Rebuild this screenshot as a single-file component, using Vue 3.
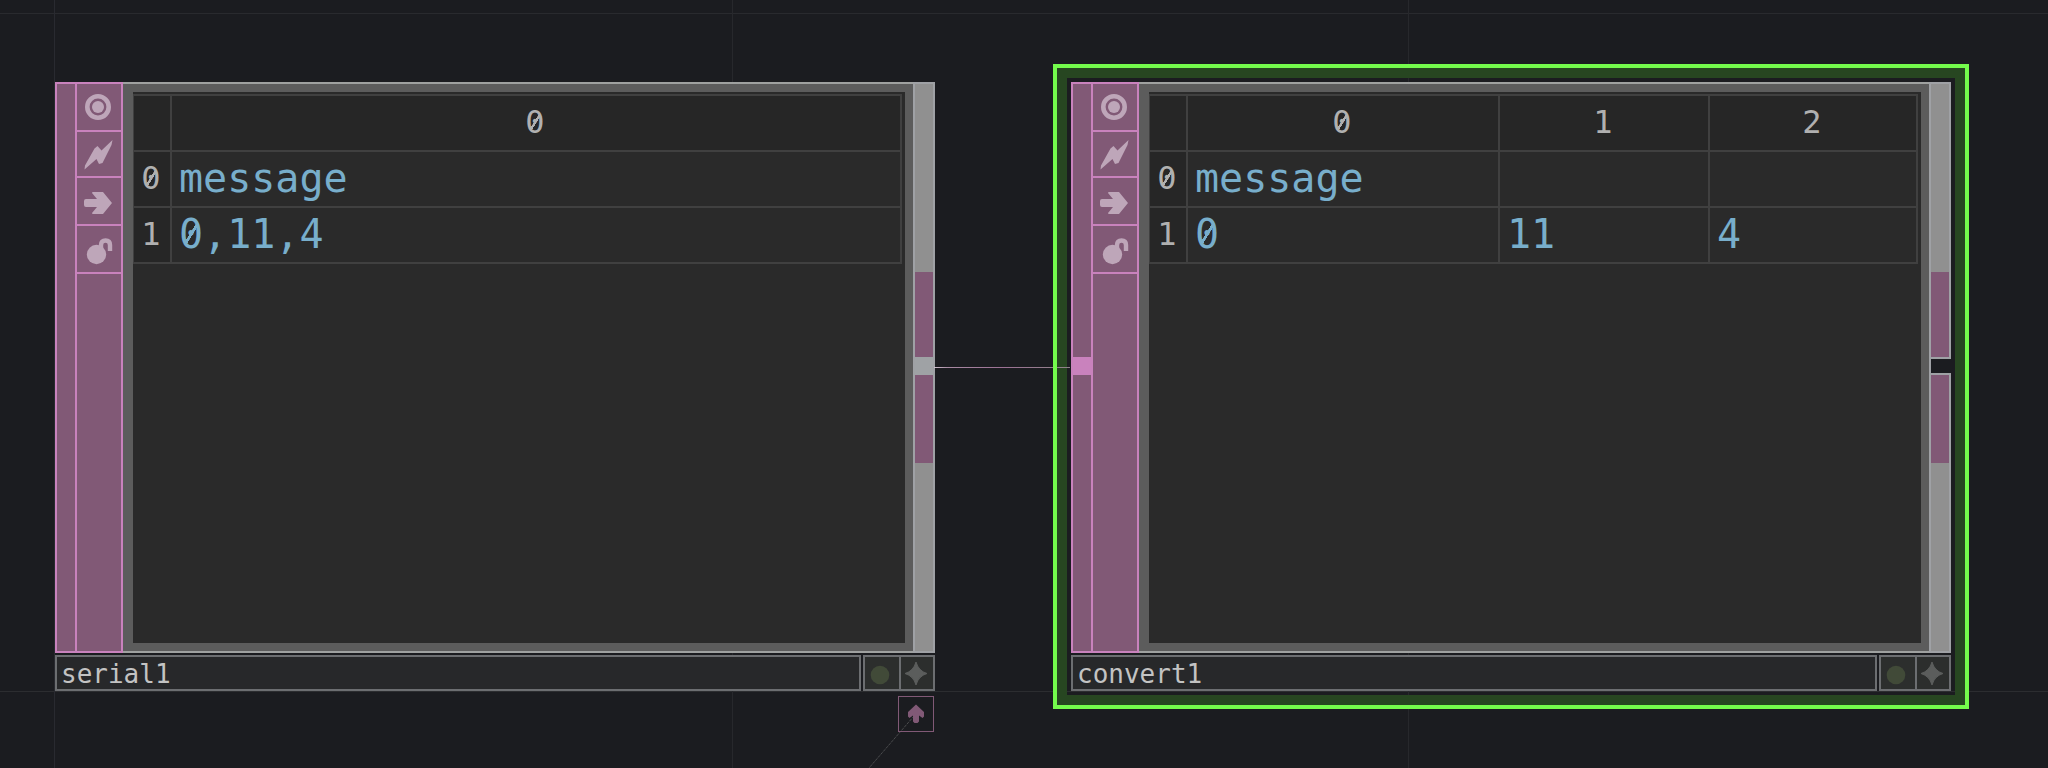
<script setup>
const nodes = [
  {
    name: 'serial1',
    place: 'at-serial',
    selected: false,
    columns: ['0'],
    rows: [['message'], ['0,11,4']]
  },
  {
    name: 'convert1',
    place: 'at-convert',
    selected: true,
    columns: ['0', '1', '2'],
    rows: [['message', '', ''], ['0', '11', '4']]
  }
]

// Splits a value so that each zero can carry a slash.
const parts = (value) => String(value).split(/(0)/).filter(Boolean)
</script>

<template>
  <main class="network">
    <section
      v-for="node in nodes"
      :key="node.name"
      class="node"
      :class="[node.place, { selected: node.selected }]"
      :aria-label="node.name"
    >
      <div class="body">
        <div class="inputs">
          <span v-if="node.selected" class="socket"></span>
        </div>
        <div class="flags">
          <button type="button" aria-label="Viewer active">
            <svg viewBox="0 0 44 44">
              <circle cx="21" cy="22" r="10.7" fill="none" stroke="currentColor" stroke-width="4.6" />
              <circle cx="21" cy="22" r="6" fill="currentColor" />
            </svg>
          </button>
          <button type="button" aria-label="Bypass">
            <svg viewBox="0 0 44 44">
              <path d="M35.500 8 34.500 13 25.500 31 22 32 19.500 27 7.500 37.500 8 33.500 17.500 16.500 20.500 14 24.500 18.500Z" fill="currentColor" />
            </svg>
          </button>
          <button type="button" aria-label="Pass through">
            <svg viewBox="0 0 44 44">
              <path d="M9 20H20L15 14Q15 13 16 13H26L35 24 26 35H16Q15 35 15 34L20 28H9Q7 28 7 26V22Q7 20 9 20Z" fill="currentColor" />
            </svg>
          </button>
          <button type="button" aria-label="Lock">
            <svg viewBox="0 0 44 44">
              <circle cx="19.500" cy="27.500" r="9.700" fill="currentColor" />
              <path d="M24 21V18Q24 13.500 28.500 13.500Q33 13.500 33 18V24" fill="none" stroke="currentColor" stroke-width="4.400" />
            </svg>
          </button>
        </div>
        <div class="viewer">
          <table :aria-label="node.name + ' data'">
            <colgroup>
              <col class="c-index" />
              <col v-for="(c, i) in node.columns" :key="c" :class="node.columns.length > 1 ? 'c-' + i : ''" />
            </colgroup>
            <thead>
              <tr>
                <td class="corner"></td>
                <th v-for="c in node.columns" :key="c" scope="col">
                  <span v-for="(p, k) in parts(c)" :key="k" :class="{ zero: p === '0' }">{{ p }}</span>
                </th>
              </tr>
            </thead>
            <tbody>
              <tr v-for="(row, r) in node.rows" :key="r">
                <th scope="row">
                  <span v-for="(p, k) in parts(r)" :key="k" :class="{ zero: p === '0' }">{{ p }}</span>
                </th>
                <td v-for="(cell, i) in row" :key="i">
                  <span v-for="(p, k) in parts(cell)" :key="k" :class="{ zero: p === '0' }">{{ p }}</span>
                </td>
              </tr>
            </tbody>
          </table>
        </div>
        <div class="outputs" :class="{ open: node.selected }">
          <span class="tab"></span>
          <span class="socket"></span>
          <span class="tab"></span>
        </div>
      </div>
      <div class="footer">
        <input class="name" type="text" :value="node.name" :aria-label="node.name + ' name'" spellcheck="false" />
        <div class="tools">
          <button type="button" aria-label="Status">
            <svg viewBox="0 0 34 32"><circle cx="15" cy="18" r="9.300" fill="#414a38" /></svg>
          </button>
          <button type="button" aria-label="Activate viewer">
            <svg viewBox="0 0 32 32">
              <path d="M15 5Q17.500 14 26 16.500Q17.500 19 15 28Q12.500 19 4 16.500Q12.500 14 15 5Z" fill="#5b5d5c" stroke="#5b5d5c" />
            </svg>
          </button>
        </div>
      </div>
    </section>

    <svg class="wire" viewBox="0 0 136 1" aria-hidden="true">
      <defs>
        <linearGradient id="wireFade">
          <stop offset="0" stop-color="#d0c4cf" />
          <stop offset="0.1" stop-color="#a88aa3" />
          <stop offset="0.5" stop-color="#9c7194" />
          <stop offset="1" stop-color="#8f8389" />
        </linearGradient>
      </defs>
      <rect width="136" height="1" fill="url(#wireFade)" />
    </svg>

    <svg class="link" viewBox="0 0 46 52" aria-hidden="true">
      <path d="M45 0 0 52" fill="none" stroke="#4b4c4e" stroke-width="1" stroke-dasharray="3 1" />
    </svg>
    <button type="button" class="dock" aria-label="Docked operator">
      <svg viewBox="0 0 34 34">
        <path d="M17 7.500 25 15V19.500L23.500 21 20 18.500V24.500L18.500 26H15.500L14 24.500V18.500L10.500 21 9 19.500V15Z" fill="#815976" />
      </svg>
    </button>
  </main>
</template>

<style>
body {
  margin: 0;
  background: #1b1c20;
}
</style>

<style scoped>
* {
  box-sizing: border-box;
}
.network {
  position: relative;
  height: 100vh;
  overflow: hidden;
  background:
    linear-gradient(#292a30, #292a30) 54px 0 / 1px 100% no-repeat,
    linear-gradient(#27282c, #27282c) 732px 0 / 1px 100% no-repeat,
    linear-gradient(#27282c, #27282c) 1408px 0 / 1px 100% no-repeat,
    linear-gradient(#292a2e, #292a2e) 0 13px / 100% 1px no-repeat,
    linear-gradient(#2c2d30, #2c2d30) 0 691px / 100% 1px no-repeat,
    #1b1c20;
  font-family: "DejaVu Sans Mono", "Liberation Mono", monospace;
}
button {
  display: flex;
  align-items: center;
  justify-content: center;
  margin: 0;
  padding: 0;
  border: 0;
  background: none;
}
button svg {
  display: block;
}
.node {
  position: absolute;
  top: 82px;
  width: 880px;
  display: flex;
  flex-direction: column;
  gap: 2px;
}
.at-serial {
  left: 55px;
}
.at-convert {
  left: 1071px;
}
.selected::before,
.selected::after {
  content: "";
  position: absolute;
  pointer-events: none;
}
.selected::before {
  inset: -14px;
  border: 10px solid #274621;
}
.selected::after {
  z-index: 2;
  inset: -18px;
  border: 4px solid #74fb4c;
}
.body {
  display: flex;
  height: 571px;
}
.inputs {
  display: flex;
  flex-direction: column;
  justify-content: center;
  width: 20px;
  padding-bottom: 3px;
  border: 2px solid #c982bd;
  border-right: 0;
  background: #815976;
}
.inputs .socket {
  height: 18px;
  background: #c982bd;
}
.flags {
  width: 48px;
  border: 2px solid #c982bd;
  background: #815976;
  display: grid;
  grid-template-rows: 48px 46px 48px 48px;
  align-content: start;
}
.flags button {
  border-bottom: 2px solid #c982bd;
  color: #bea6b9;
}
.flags svg {
  width: 44px;
  height: 44px;
}
.viewer {
  flex: 1;
  border-top: 2px solid #9fa1a0;
  border-bottom: 2px solid #9fa1a0;
  padding: 8px 8px 8px 10px;
  background: linear-gradient(#2a2a2a, #2a2a2a) content-box, #5c5c5c;
}
table {
  width: calc(100% - 3px);
  margin-top: 2px;
  table-layout: fixed;
  border-collapse: separate;
  border-spacing: 0;
  border-top: 2px solid #404040;
  border-left: 1px solid #404040;
}
.c-index {
  width: 38px;
}
.c-0 {
  width: 312px;
}
.c-1 {
  width: 210px;
}
th,
td {
  height: 56px;
  padding: 0 2px 2px 0;
  border-right: 2px solid #404040;
  border-bottom: 2px solid #404040;
  line-height: 48px;
}
th,
.corner {
  background: #262626;
  color: #b0b0b0;
  font-size: 32px;
  font-weight: 400;
  text-align: center;
}
tbody td {
  padding-left: 7px;
  color: #78aecb;
  font-size: 40px;
  text-align: left;
}
.zero {
  background: linear-gradient(to bottom right, transparent 43%, currentColor 44% 56%, transparent 57%) center / 52% 44% no-repeat;
}
.outputs {
  display: flex;
  flex-direction: column;
  justify-content: center;
  width: 22px;
  border: 2px solid #9fa1a5;
  background: #909090;
}
.tab {
  height: 85px;
  background: #815976;
}
.tab:last-child {
  height: 88px;
}
.outputs .socket {
  height: 18px;
  background: #9fa2a5;
}
.open .socket {
  margin-right: -2px;
  border: solid #9fa1a5;
  border-width: 2px 0;
  background: #1b1c20;
}
.footer {
  display: flex;
  gap: 2px;
  height: 36px;
}
.name {
  flex: 1;
  min-width: 0;
  padding: 2px 4px 0;
  border: 2px solid #6c6e71;
  border-radius: 0;
  outline: 0;
  background: #27282a;
  color: #c3c3c3;
  font: 26px "DejaVu Sans Mono", "Liberation Mono", monospace;
}
.tools {
  display: grid;
  grid-template-columns: 34px 32px;
  gap: 2px;
  border: 2px solid #6c6e71;
  background: #6c6e71;
}
.tools button {
  background: #2c2e2d;
}
.tools svg {
  width: 100%;
  height: 32px;
}
.wire {
  position: absolute;
  z-index: 1;
  left: 934px;
  top: 367px;
  width: 136px;
  height: 1px;
}
.link {
  position: absolute;
  left: 869px;
  top: 716px;
  width: 46px;
  height: 52px;
}
.dock {
  position: absolute;
  left: 898px;
  top: 696px;
  width: 36px;
  height: 36px;
  border: 1px solid #815976;
}
.dock svg {
  width: 34px;
  height: 34px;
}
</style>
